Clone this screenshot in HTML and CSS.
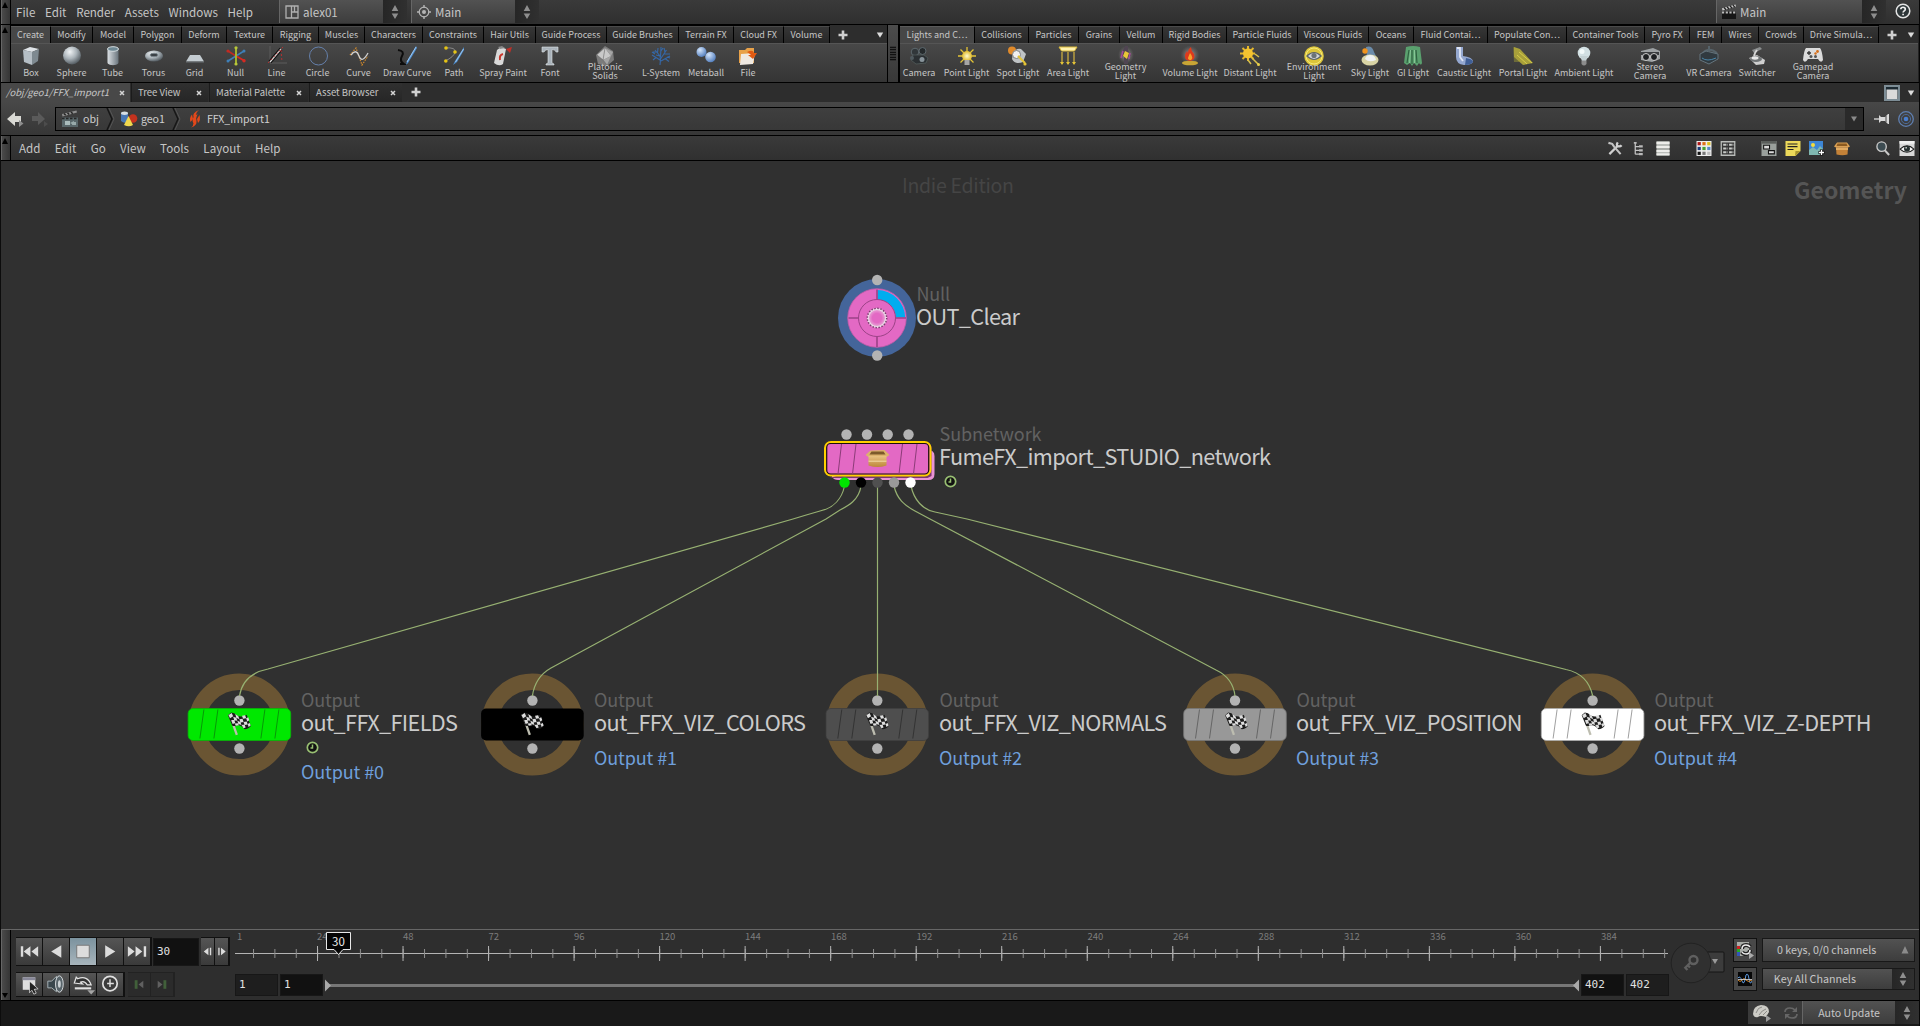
FILE: index.html
```html
<!DOCTYPE html>
<html lang="en">
<head>
<meta charset="utf-8">
<title>Houdini Indie</title>
<link rel="stylesheet" href="styles.css">
</head>
<body>
<svg class="sprite" width="0" height="0">
  <defs>
    <linearGradient id="gSteel" x1="0" x2="1"><stop offset="0" stop-color="#dbe0e4"/><stop offset="1" stop-color="#69747c"/></linearGradient>
    <radialGradient id="gBall" cx=".38" cy=".3" r=".75"><stop offset="0" stop-color="#f0f3f5"/><stop offset=".5" stop-color="#aab3b9"/><stop offset="1" stop-color="#4a5258"/></radialGradient>
    <radialGradient id="gBlue" cx=".35" cy=".3" r=".8"><stop offset="0" stop-color="#d5e6fb"/><stop offset="1" stop-color="#4674b8"/></radialGradient>
    <radialGradient id="gSun"><stop offset="0" stop-color="#fffbd0"/><stop offset="1" stop-color="#e0b92c"/></radialGradient>
    <radialGradient id="gGlow"><stop offset="0" stop-color="#b9a6a6"/><stop offset="1" stop-color="#777" stop-opacity="0"/></radialGradient>
    <linearGradient id="gBox" x1="0" y1="0" x2="0" y2="1"><stop offset="0" stop-color="#e8c382"/><stop offset="1" stop-color="#bd8739"/></linearGradient>
    <radialGradient id="gHub"><stop offset=".5" stop-color="#e369c4"/><stop offset="1" stop-color="#e9b4da"/></radialGradient>
  </defs>
  <symbol id="i-updown" viewBox="0 0 10 16"><path d="M5 1 8.300 7H1.700zM5 15 8.300 9.500H1.700z" fill="#8e8e8e"/></symbol>
  <symbol id="i-plus" viewBox="0 0 10 10"><path d="M3.700.5h2.600v3.200h3.200v2.600H6.300v3.200H3.700V6.300H.5V3.700h3.200z" fill="#d0d0d0"/></symbol>
  <symbol id="i-down" viewBox="0 0 8 6"><path d="M.8.500h6.400L4 5.700z" fill="#dcdcdc"/></symbol>
  <symbol id="i-close" viewBox="0 0 6 6"><path d="m1 1 4 4M5 1 1 5" stroke="#d5d5d5" stroke-width="1.500"/></symbol>
  <symbol id="i-desk" viewBox="0 0 14 14"><path d="M1 1h12v12H1zM6.500 1v12M9.500 1v6M6.500 7H13" fill="none" stroke="#b0b0b0" stroke-width="1.300"/></symbol>
  <symbol id="i-target" viewBox="0 0 14 14"><circle cx="7" cy="7" r="4.800" fill="none" stroke="#b4b4b4" stroke-width="1.200"/><circle cx="7" cy="7" r="2" fill="#b4b4b4"/><path d="M7 0v3M7 11v3M0 7h3M11 7h3" stroke="#b4b4b4" stroke-width="1.400"/></symbol>
  <symbol id="i-clap" viewBox="0 0 16 16"><path d="M1 7.500h14V15H1z" fill="#161616"/><path d="M1 4.200 14.500.5l.5 2L1.500 6.500z" fill="#c9c9c9"/><path d="m3 3.500 2 2.200M6 2.700 8 5M9 2l2 2M12 1.200l1.700 2" stroke="#222" stroke-width="1.300"/><path d="M1 8.500h14" stroke="#bbb" stroke-width="2" stroke-dasharray="2.200 1.500"/></symbol>
  <symbol id="i-clapgrey" viewBox="0 0 18 18"><path d="M1 7.500h16V17H1z" fill="#59676a"/><path d="M1 4 15.500.5l.5 2L1.500 6.500z" fill="#8f8f8f"/><path d="m3 3.500 2 2.200M6.500 2.700l2 2.300M10 2l2 2M1 8.500h16" stroke="#262626" stroke-width="1.500" stroke-dasharray="2.500 1.500"/><rect x="4" y="11" width="5" height="4" fill="#abb"/><path d="m9 13 4-2v4zM11 12h4v3h-4z" fill="#9aa"/></symbol>
  <symbol id="i-help" viewBox="0 0 16 16"><circle cx="8" cy="8" r="6.800" fill="#2e3638" stroke="#e4e4e4" stroke-width="1.500"/><path d="M5.800 6.300C5.800 3.500 10.400 3.600 10.300 6.200 10.200 7.800 8.100 7.900 8.100 9.600M8.100 10.800v1.500" fill="none" stroke="#f0f0f0" stroke-width="1.700"/></symbol>

  <symbol id="t-box" viewBox="0 0 20 20"><path d="m2 4 7-3 9 2-7 3z" fill="#dfe4e8"/><path d="m2 4 9 2v13l-8-3z" fill="#b5bec5"/><path d="m11 6 7-3-1 12-6 4z" fill="#7e8990"/></symbol>
  <symbol id="t-sphere" viewBox="0 0 20 20"><circle cx="10" cy="9.500" r="9" fill="url(#gBall)"/></symbol>
  <symbol id="t-tube" viewBox="0 0 20 20"><path d="M4.500 3v13.500c0 3.500 11 3.500 11 0V3z" fill="url(#gSteel)"/><ellipse cx="10" cy="3" rx="5.500" ry="2.300" fill="#6e8894" stroke="#d6dde0"/></symbol>
  <symbol id="t-torus" viewBox="0 0 20 20"><ellipse cx="10" cy="10" rx="9" ry="5.500" fill="url(#gBall)"/><ellipse cx="10" cy="9" rx="4" ry="1.700" fill="#3b4146" stroke="#7b858c"/></symbol>
  <symbol id="t-grid" viewBox="0 0 20 20"><path d="M5 9h10l4 6.500H1z" fill="#c3cbd0"/><path d="M1 15.500h18v1H1z" fill="#6a7074"/></symbol>
  <symbol id="t-null" viewBox="0 0 20 20"><path d="m2 5 8 5" stroke="#c22a22" stroke-width="1.500"/><path d="m18 5-8 5-8 5" fill="none" stroke="#3f7fb8" stroke-width="1.500"/><path d="m10 10 8 4.500" stroke="#d42a22" stroke-width="2"/><path d="M10 1v18" stroke="#a9b830" stroke-width="1.900"/><circle cx="10" cy="1.800" r="1.600" fill="#b9c83a"/><circle cx="10" cy="18" r="1.600" fill="#b9c83a"/><circle cx="2" cy="5" r="1.600" fill="#c22a22"/><circle cx="18" cy="14.700" r="1.700" fill="#d42a22"/><circle cx="18" cy="5" r="1.500" fill="#3f7fb8"/><circle cx="2" cy="15" r="1.500" fill="#3f7fb8"/></symbol>
  <symbol id="t-line" viewBox="0 0 20 20"><path d="M3 0v17h17" fill="none" stroke="#5c5c5c"/><path d="M3 16 14 3" stroke="#101010" stroke-width="3.500"/><path d="M3 16 14 3" stroke="#ddd" stroke-width="1.200"/><path d="M1 17 16 1M14 4l1 12" stroke="#b83030" stroke-dasharray="2 2" fill="none"/></symbol>
  <symbol id="t-circle" viewBox="0 0 20 20"><circle cx="10.500" cy="10" r="9" fill="none" stroke="#6580ab"/></symbol>
  <symbol id="t-curve" viewBox="0 0 20 20"><path d="m1 9 6-7 6 17 6-9" fill="none" stroke="#d58b2a" stroke-width="1.200" stroke-dasharray="1.500 1.200"/><path d="M2 9q5-7 8 1t9-3" fill="none" stroke="#cfcfcf" stroke-width="1.300"/></symbol>
  <symbol id="t-draw" viewBox="0 0 20 20"><path d="M1 4q7 1 4 6t2 8H3" fill="none" stroke="#0c0c0c" stroke-width="2"/><path d="m19 0 1 2-9 15-2 2 1-4z" fill="#4f8fd0"/><path d="m19 1-9 15" stroke="#b0d0f0" stroke-width=".8"/></symbol>
  <symbol id="t-path" viewBox="0 0 20 20"><path d="M1 2q11-1 10 4T1 15" fill="none" stroke="#888"/><circle cx="2" cy="2" r="1.800" fill="#e6c414"/><circle cx="11" cy="6" r="1.800" fill="#e6c414"/><circle cx="1.800" cy="15" r="1.800" fill="#e6c414"/><path d="m20 1-9 14-2 4 4-3 7-12z" fill="#4f8fd0"/><path d="m19.500 3-8 13" stroke="#b0d0f0" stroke-width=".8"/></symbol>
  <symbol id="t-spray" viewBox="0 0 20 20"><path d="m4 4 4-3 5 2-3 15q-4 3-9-1z" fill="#d9d9d9"/><path d="m5 1 4-1 3 2-5 1z" fill="#8a8a8a"/><path d="m13 3 6-2-2 6z" fill="#c03028"/><path d="M10 8q-4 1-3 6" stroke="#c8352a" stroke-width="2" fill="none"/></symbol>
  <symbol id="t-font" viewBox="0 0 20 20"><path d="M2 1h16v5h-2q-.500-2.500-4-2.500V17l2 1v1H6v-1l2-1V3.500Q5 3.500 4 6H2z" fill="#a9b2ba" stroke="#dfe4e7" stroke-width=".6"/></symbol>
  <symbol id="t-platonic" viewBox="0 0 20 20"><path d="m10 0 8 5 1 9-7 6-9-2-2-9z" fill="#7c7c7c"/><path d="m10 2 6 8-8 4-6-5z" fill="#c9c9c9"/><path d="m10 2 6 8 2-4zM8 14l8-4-4 9z" fill="#a5a5a5"/><path d="m10 2-2 12M2 9l6 5 4 5" stroke="#666" stroke-width=".6" fill="none"/></symbol>
  <symbol id="t-lsys" viewBox="0 0 20 20"><path d="M9 19q1-5 0-9L4 4M9.500 11 10 1M9.500 13l6-9M9 14 1 9M10 15l9-5M6 6H2M6.500 7 7 2M13 8h6M14 6 13 2M5 11.500 2 14M14 12.500l4 3M10 5l2-3M4 8 1 6M16 11l3 1M9 10 5 9" fill="none" stroke="#3568a8" stroke-width="1.100"/></symbol>
  <symbol id="t-meta" viewBox="0 0 20 20"><circle cx="5.500" cy="6" r="5" fill="url(#gBlue)"/><circle cx="14.500" cy="11" r="5.300" fill="url(#gBlue)"/></symbol>
  <symbol id="t-file" viewBox="0 0 20 20"><path d="M1 4h6l2-2h7v15H1z" fill="#e8a24a"/><path d="m3 8 14-1-2 11-13 1z" fill="#efe9e2"/><path d="M9 6q6-3 7 1l3 0-4 6-5-4h3q-2-2-4-3z" fill="#e25a12"/></symbol>
  <symbol id="t-cam" viewBox="0 0 20 20"><circle cx="6" cy="6" r="3.800" fill="#31373a" stroke="#5d686d"/><circle cx="13.500" cy="5" r="3.500" fill="#252a2c" stroke="#5d686d"/><path d="M4 9h11l4 3-2 5-10 1-5-4z" fill="#2b3033" stroke="#55605f" stroke-width=".7"/><circle cx="13" cy="13.500" r="2.500" fill="#88939a"/><circle cx="3" cy="12" r="2" fill="#505a5f"/></symbol>
  <symbol id="t-point" viewBox="0 0 20 20"><path d="M10 1v18M1 10h18M3.500 3.500l13 13M16.500 3.500l-13 13" stroke="#e3c336" stroke-width="1.300"/><circle cx="10" cy="10" r="5" fill="url(#gSun)"/><path d="M7.500 14h5v5h-5z" fill="#a5a5a5"/></symbol>
  <symbol id="t-spot" viewBox="0 0 20 20"><circle cx="4" cy="4.500" r="4" fill="#e08a2a"/><path d="M5 7q2-5 8-4l5 5-3 8q-8 3-11-3z" fill="#bfc3c5"/><circle cx="8.500" cy="8.500" r="4" fill="#f1f1f1" stroke="#818181"/><path d="m10 10 7 7" stroke="#e3c336" stroke-width="2"/><circle cx="17" cy="18" r="1.600" fill="#e3c336"/></symbol>
  <symbol id="t-area" viewBox="0 0 20 20"><path d="M1 1h18l-2.500 4h-13z" fill="#fff2b0" stroke="#d9b93a"/><path d="M4 6v12M10 6v12M16 6v12" stroke="#d5b540" stroke-width="1.200"/><path d="M2 16h4l-2 3zM8 16h4l-2 3zM14 16h4l-2 3z" fill="#e3c336"/></symbol>
  <symbol id="t-geo" viewBox="0 0 20 20"><ellipse cx="10" cy="9" rx="8" ry="9" fill="url(#gGlow)"/><path d="M9 0h3v4l3 6-3 1v7H8v-7l-3-2z" fill="#504552"/><path d="m9 5 4 2-2 6-4-3z" fill="#e7c738"/><path d="M7 5 5 12M13 13l1-6" stroke="#a44a9a" stroke-width="1.500"/></symbol>
  <symbol id="t-vol" viewBox="0 0 20 20"><ellipse cx="10" cy="9" rx="9.500" ry="9.500" fill="url(#gGlow)"/><ellipse cx="10" cy="17" rx="8" ry="2.300" fill="#c8a535"/><path d="M5 11q0-4 2-6l1 2q0-4 3-6 0 4 3 7 2 6-4 7-5-.5-5-4z" fill="#dd3a1c"/><path d="M8 12q1-3 2-5 4 5 1 7-3 0-3-2z" fill="#f7a02c"/></symbol>
  <symbol id="t-dist" viewBox="0 0 20 20"><path d="M8 0v15M0 7.500h15M2.500 2l11 11M13.500 2l-11 11" stroke="#e5b82c" stroke-width="2"/><circle cx="8" cy="7.500" r="5" fill="#f4c330"/><path d="m15 8 4 3M12 12l6 6M8 14l3 4" stroke="#d9c04a" stroke-width="1.500"/><circle cx="18.500" cy="18.500" r="1.500" fill="#e9d04a"/></symbol>
  <symbol id="t-env" viewBox="0 0 20 20"><circle cx="10" cy="10" r="9.800" fill="#dcc53a"/><circle cx="10" cy="10" r="8" fill="none" stroke="#f5e97a"/><path d="M2 10q8-8 16 0-8 8-16 0z" fill="#5d6468"/><path d="M4 10q6-6 12 0-6 6-12 0z" fill="#d0d3d5"/><circle cx="10" cy="9.500" r="2.600" fill="#6a7277"/></symbol>
  <symbol id="t-sky" viewBox="0 0 20 20"><path d="M6 1q6-2 8 5l3 6H7z" fill="#6c8caa"/><circle cx="5" cy="5" r="2.700" fill="#f0941f"/><ellipse cx="10" cy="14" rx="8.500" ry="5.500" fill="#d9d4a5"/><path d="M5 13q1-4 5-4 5 0 6 5-7 3-11-1z" fill="#eef1f3"/></symbol>
  <symbol id="t-gi" viewBox="0 0 20 20"><path d="M3 1q7-2 14 0l2 16q-1 3-3 0l-2 3-3-3-2 3-2-3-3 2-3-2z" fill="#5aa06e"/><path d="m6 4-2 13M9 4v14M13 4l1 13" stroke="#2f6140" stroke-width="1.200"/><path d="m7.500 4-1 13M11.500 4v13" stroke="#93cfa1" stroke-width=".8"/></symbol>
  <symbol id="t-caustic" viewBox="0 0 20 20"><path d="M2 1h7v9q9 1 10 5 0 4-9 4Q2 18 2 11z" fill="#95a8d0"/><path d="M3 2h3v9l3 4" stroke="#dfe6f5" stroke-width="1.800" fill="none"/><path d="M12 12q7 1 7 4-2 3-8 3z" fill="#405f96"/></symbol>
  <symbol id="t-portal" viewBox="0 0 20 20"><path d="m0 1 6 2v13H1z" fill="#6c6a3a"/><path d="m1 1 6 2 13 14-10 2-9-8z" fill="#a8a03a"/><path d="m6 6 13 11M4 9l10 9" stroke="#d6cc4a"/></symbol>
  <symbol id="t-amb" viewBox="0 0 20 20"><circle cx="10" cy="7" r="6.300" fill="#d2e0e3"/><path d="M6 10h8l-2 5H8z" fill="#c4d1d4"/><path d="M7.500 14.500h5V18q-2.500 3-5 0z" fill="#8c8c8c"/><circle cx="8" cy="5.500" r="2.500" fill="#f3fafa"/></symbol>
  <symbol id="t-stereo" viewBox="0 0 20 20"><path d="m1 5 12-3 7 3v8l-8 3-11-2z" fill="#9da1a3"/><path d="M1 6h18v3H1z" fill="#3a3d3f"/><circle cx="6" cy="11" r="3.500" fill="#1d2022" stroke="#ccc"/><circle cx="14" cy="11" r="3.500" fill="#1d2022" stroke="#ccc"/></symbol>
  <symbol id="t-vr" viewBox="0 0 20 20"><path d="M3 8q6-8 15-1" fill="none" stroke="#56636a" stroke-width="2"/><path d="m1 8 6-3 12 3v5l-9 5-9-4z" fill="#303a40" stroke="#65757e"/><path d="M3 12q5 4 14 0" stroke="#4a86aa" fill="none"/><path d="M10 0v6" stroke="#56636a" stroke-width="2"/></symbol>
  <symbol id="t-switch" viewBox="0 0 20 20"><path d="m5 4 8-3 2 2-8 4z" fill="#8a8d8e"/><path d="M10 4q-4 5-2 8" stroke="#d6d6d6" stroke-width="2" fill="none"/><path d="m2 12 8-3 8 5-1 4-8 1z" fill="#cfcfcf"/><ellipse cx="9" cy="13" rx="6" ry="3" fill="#6f7375"/><ellipse cx="8" cy="12" rx="3.500" ry="1.700" fill="#e9e9e9"/></symbol>
  <symbol id="t-pad" viewBox="0 0 20 20"><path d="M3 2h14q2 2 3 12-2 4-5-1H5q-3 5-5 1Q1 4 3 2z" fill="#dcdcdc"/><path d="M6 5v4M4 7h4" stroke="#333" stroke-width="1.300"/><circle cx="14.500" cy="5.500" r="1.400" fill="#d7701c"/><circle cx="12.500" cy="7.500" r="1.200" fill="#d7701c"/><circle cx="8" cy="10.500" r="1.500" fill="#555"/><circle cx="12.500" cy="10.500" r="1.500" fill="#555"/></symbol>

  <symbol id="i-back" viewBox="0 0 18 16"><path d="M0 8 8 1v4h6v6H8v4z" fill="#d9d9d4"/><path d="m12 9 4.500 3.500-4.500 3.500z" fill="#8d8d8d"/></symbol>
  <symbol id="i-fwd" viewBox="0 0 18 16"><path d="M13 8 6 1v4H0v5h6v4z" fill="#5a5a5a"/><path d="m12 10 4 3-4 3z" fill="#4c4c4c"/></symbol>
  <symbol id="i-geo" viewBox="0 0 18 16"><path d="M1 2v8q3 3 7 1V2z" fill="#4776b4"/><ellipse cx="4.500" cy="2.200" rx="3.500" ry="1.700" fill="#d6dde2"/><circle cx="13" cy="7.500" r="4.300" fill="#c3321e"/><path d="M8.500 5 13 14q-4 2.500-9 0z" fill="#f0d84e"/></symbol>
  <symbol id="i-ffx" viewBox="0 0 12 18"><path d="M10 0Q3 3 4.500 7q1.500 3-.5 6Q6 12 7 9.500 8 6 6.800 5 7 2 10 0zM2 17.500q6-2 5.500-6Q6.500 8 8.500 4 6 5 4.300 7.500 2.800 11 4.500 13 4.500 16 2 17.500z" fill="#e4481a"/><path d="M3 4.500Q0 8 1.500 12L4 9zM9 13q3-3 1.500-8L8 9z" fill="#e4481a"/></symbol>
  <symbol id="i-pane" viewBox="0 0 16 16"><rect width="16" height="16" fill="#7d8d96"/><rect x="2" y="2" width="12" height="12" fill="#1c2a32"/><path d="M2.500 4.500h11V14h-11z" fill="#dadada"/></symbol>
  <symbol id="i-pin" viewBox="0 0 16 14"><path d="M0 7h6" stroke="#ddd" stroke-width="1.300"/><path d="m5 3 2 2h4l3-3h1v10h-1l-3-3H7l-2 2z" fill="#d9d9d9"/><path d="M12 4v6" stroke="#444"/></symbol>
  <symbol id="i-radar" viewBox="0 0 16 16"><g fill="none" stroke="#5f7fb0"><circle cx="8" cy="8" r="7.300" stroke-width="1.300"/><circle cx="8" cy="8" r="4.600" stroke="#4d6a98"/></g><circle cx="8" cy="8" r="2.300" fill="#4a7fd0"/></symbol>
  <symbol id="i-tools" viewBox="0 0 16 16"><path d="m2 14 9-9M11 1.500q-2 3 0 4 2.500 1 4-1" fill="none" stroke="#d0d0d0" stroke-width="2.400"/><path d="m1 2 4 1 2 3 7 8" fill="none" stroke="#c4c4c4" stroke-width="2.200"/></symbol>
  <symbol id="i-tree" viewBox="0 0 14 16"><path d="M3 2v12M3 6h4M3 10h4M3 14h4" fill="none" stroke="#c4c4c4" stroke-width="1.300"/><path d="M1.500 1h3v2h-3zM7 4.500h4v2.500H7zM7 8.700h4v2.500H7zM7 12.800h4v2.500H7z" fill="#b9b9b9"/></symbol>
  <symbol id="i-list" viewBox="0 0 14 16"><path d="M0 0h14v16H0z" fill="#a9aca8"/><path d="M0 1h14v2.500H0zM0 5h14v2.500H0zM0 9.500h14V12H0zM0 13h14v2H0z" fill="#ededea"/></symbol>
  <symbol id="i-palette" viewBox="0 0 14 14"><path d="M0 0h14v14H0z" fill="#eee"/><path d="M1 1h3v3H1z" fill="#b01818"/><path d="M5.500 1h3v3h-3z" fill="#e07018"/><path d="M10 1h3v3h-3z" fill="#e0c018"/><path d="M1 5.500h3v3H1z" fill="#1c3c78"/><path d="M5.500 5.500h3v3h-3z" fill="#4aa030"/><path d="M10 5.500h3v3h-3z" fill="#5a88c8"/><path d="M1 10h3v3H1z" fill="#111"/><path d="M5.500 10h3v3h-3z" fill="#777"/><path d="M10 10h3v3h-3z" fill="#bbb"/></symbol>
  <symbol id="i-grid" viewBox="0 0 14 14"><path d="M.7.700h12.600v12.600H.7z" fill="none" stroke="#b9bcb9" stroke-width="1.200"/><path d="M2.500 3.500h4M8 3.500h4M2.500 7h4M8 7h4M2.500 10.500h4M8 10.500h4" stroke="#c9ccc9" stroke-width="1.800" stroke-dasharray="2.600 .6"/></symbol>
  <symbol id="i-netbox" viewBox="0 0 14 14"><path d="M0 0h14v14H0z" fill="#9aa09c"/><path d="M0 0h14v2.500H0z" fill="#5a5e5b"/><path d="M2 4h5.500v3.500H2zM6.500 9h5.500v3H6.500z" fill="#ddd" stroke="#111"/></symbol>
  <symbol id="i-note" viewBox="0 0 15 15"><path d="M0 0h15v10l-5 5H0z" fill="#ecd95a"/><path d="M2 3h10M2 5.700h10M2 8.500h6" stroke="#222" stroke-width="1.200"/><path d="m9.500 15 .5-5h5z" fill="#a8962e"/></symbol>
  <symbol id="i-image" viewBox="0 0 16 15"><path d="M0 0h14v14H0z" fill="#3d86d6"/><path d="M0 14V9l4-3 4 3 3-4 3 3v6z" fill="#7fb7b0"/><circle cx="4" cy="4" r="2" fill="#f4dc3c"/><path d="M12.500 8.500v6M9.500 11.500h6" stroke="#111" stroke-width="3.200"/><path d="M12.500 9v5M10 11.500h5" stroke="#fff" stroke-width="1.300"/></symbol>
  <symbol id="i-box" viewBox="0 0 16 14"><path d="m3 1 10 0 3 4-2 1H2L0 5z" fill="#dba155"/><path d="M2 6h12l-.5 7q-5 1.500-11 0z" fill="#c48238"/><path d="M3.500 2h9l1 2.500h-11z" fill="#8c5a20"/><path d="M2 6h12v2.500H2z" fill="#e2ab62"/></symbol>
  <symbol id="i-search" viewBox="0 0 16 16"><path d="m10 10 4.500 5" stroke="#c9c9c9" stroke-width="2.200"/><circle cx="6.500" cy="6" r="5" fill="#3d4c52" stroke="#cdcdcd" stroke-width="1.400"/></symbol>
  <symbol id="i-eye" viewBox="0 0 14 14"><path d="M0 0h14v14H0z" fill="#d8d8d8"/><path d="M0 0h14v2.500H0z" fill="#efefef"/><path d="M.5 7.500q6.500-6 13 0-6.500 6-13 0z" fill="#f8f8f8" stroke="#222"/><circle cx="7" cy="7.300" r="2.800" fill="#26302f"/><circle cx="6.200" cy="6.300" r=".8" fill="#ddd"/></symbol>

  <symbol id="i-flag" viewBox="0 0 26 26"><path d="m4 3 7 20" stroke="#bdbdb0" stroke-width="2.200"/><path d="m2.500 4 3-2.500q3 0 6 3 5 2 9-1l4 11q-2 3-6 3-4-5-8-3.500-3 1-4 0z" fill="#1c1c1c"/><g fill="#dedede"><path d="m3 4 3-2 1.500 3-3 2zM9.500 3l3 2 1 3-3-1.500zM16 4.500l3-.5 1 3-3 .5zM7.500 5.500l3 1 1 3-3-.5zM13.500 8l3-.5 1 3-3 .5zM20 7l2-1 1 3-2 1zM5.500 9l3-.5 1 3-2.500 1zM11.500 9.500l3 1 1 3-3-1zM17.500 10.500l3-.5 1 3-3 .5zM9 12l3-.2 1 2-3 .5zM15.500 13.500l3-.5 1 3-2 .5zM21.500 12.500l2-1 .8 2.500-2 1.500z"/></g></symbol>
  <symbol id="i-clock" viewBox="0 0 13 13"><circle cx="6.500" cy="6.500" r="5.200" fill="#111" stroke="#98bf72" stroke-width="1.700"/><path d="M6.500 3.500v3.500H4.500" fill="none" stroke="#98bf72" stroke-width="1.500"/></symbol>
  <symbol id="i-parcel" viewBox="0 0 24 18"><path d="m5 1 14-.5 5 5-3 2H3L0 5.500z" fill="#dcb26c"/><path d="M6 2h12l2 3H4z" fill="#7c5a2a"/><path d="M3 6.500h18V16q-9 3-18 0z" fill="url(#gBox)"/><path d="M3 11h18v1.500H3z" fill="#e9ca90"/></symbol>
</svg>

<div class="app">
  <header class="menubar">
    <div class="grip"></div>
    <nav class="menu menu-main"><span>File</span><span>Edit</span><span>Render</span><span>Assets</span><span>Windows</span><span>Help</span></nav>
    <div class="combo desk"><svg width="14" height="14"><use href="#i-desk"/></svg><span>alex01</span></div>
    <div class="step"><svg width="10" height="16"><use href="#i-updown"/></svg></div>
    <div class="combo radial"><svg width="14" height="14"><use href="#i-target"/></svg><span>Main</span></div>
    <div class="step"><svg width="10" height="16"><use href="#i-updown"/></svg></div>
    <div class="combo take"><svg width="16" height="16"><use href="#i-clap"/></svg><span>Main</span></div>
    <div class="step"><svg width="10" height="16"><use href="#i-updown"/></svg></div>
    <svg class="help" width="16" height="16"><use href="#i-help"/></svg>
  </header>

  <section class="shelves">
    <div class="grip"></div>
    <div class="shelf shelf-a">
      <div class="tabs">
        <span class="on">Create</span><span>Modify</span><span>Model</span><span>Polygon</span><span>Deform</span><span>Texture</span><span>Rigging</span><span>Muscles</span><span>Characters</span><span>Constraints</span><span>Hair Utils</span><span>Guide Process</span><span>Guide Brushes</span><span>Terrain FX</span><span>Cloud FX</span><span>Volume</span>
        <div class="tab-end"><svg width="10" height="10"><use href="#i-plus"/></svg><svg width="8" height="6"><use href="#i-down"/></svg></div>
      </div>
      <div class="tools">
        <div><svg><use href="#t-box"/></svg><b>Box</b></div>
        <div><svg><use href="#t-sphere"/></svg><b>Sphere</b></div>
        <div><svg><use href="#t-tube"/></svg><b>Tube</b></div>
        <div><svg><use href="#t-torus"/></svg><b>Torus</b></div>
        <div><svg><use href="#t-grid"/></svg><b>Grid</b></div>
        <div><svg><use href="#t-null"/></svg><b>Null</b></div>
        <div><svg><use href="#t-line"/></svg><b>Line</b></div>
        <div><svg><use href="#t-circle"/></svg><b>Circle</b></div>
        <div><svg><use href="#t-curve"/></svg><b>Curve</b></div>
        <div><svg><use href="#t-draw"/></svg><b>Draw Curve</b></div>
        <div><svg><use href="#t-path"/></svg><b>Path</b></div>
        <div><svg><use href="#t-spray"/></svg><b>Spray Paint</b></div>
        <div><svg><use href="#t-font"/></svg><b>Font</b></div>
        <div class="two"><svg><use href="#t-platonic"/></svg><b>Platonic<br>Solids</b></div>
        <div><svg><use href="#t-lsys"/></svg><b>L-System</b></div>
        <div><svg><use href="#t-meta"/></svg><b>Metaball</b></div>
        <div><svg><use href="#t-file"/></svg><b>File</b></div>
      </div>
    </div>
    <div class="splitter"><i></i></div>
    <div class="shelf shelf-b">
      <div class="tabs">
        <span class="on">Lights and C…</span><span>Collisions</span><span>Particles</span><span>Grains</span><span>Vellum</span><span>Rigid Bodies</span><span>Particle Fluids</span><span>Viscous Fluids</span><span>Oceans</span><span>Fluid Contai…</span><span>Populate Con…</span><span>Container Tools</span><span>Pyro FX</span><span>FEM</span><span>Wires</span><span>Crowds</span><span>Drive Simula…</span>
        <div class="tab-end"><svg width="10" height="10"><use href="#i-plus"/></svg><svg width="8" height="6"><use href="#i-down"/></svg></div>
      </div>
      <div class="tools">
        <div><svg><use href="#t-cam"/></svg><b>Camera</b></div>
        <div><svg><use href="#t-point"/></svg><b>Point Light</b></div>
        <div><svg><use href="#t-spot"/></svg><b>Spot Light</b></div>
        <div><svg><use href="#t-area"/></svg><b>Area Light</b></div>
        <div class="two"><svg><use href="#t-geo"/></svg><b>Geometry<br>Light</b></div>
        <div><svg><use href="#t-vol"/></svg><b>Volume Light</b></div>
        <div><svg><use href="#t-dist"/></svg><b>Distant Light</b></div>
        <div class="two"><svg><use href="#t-env"/></svg><b>Environment<br>Light</b></div>
        <div><svg><use href="#t-sky"/></svg><b>Sky Light</b></div>
        <div><svg><use href="#t-gi"/></svg><b>GI Light</b></div>
        <div><svg><use href="#t-caustic"/></svg><b>Caustic Light</b></div>
        <div><svg><use href="#t-portal"/></svg><b>Portal Light</b></div>
        <div><svg><use href="#t-amb"/></svg><b>Ambient Light</b></div>
        <div class="two"><svg><use href="#t-stereo"/></svg><b>Stereo<br>Camera</b></div>
        <div><svg><use href="#t-vr"/></svg><b>VR Camera</b></div>
        <div><svg><use href="#t-switch"/></svg><b>Switcher</b></div>
        <div class="two"><svg><use href="#t-pad"/></svg><b>Gamepad<br>Camera</b></div>
      </div>
    </div>
  </section>

  <div class="pane-tabs">
    <div class="ptab on"><span>/obj/geo1/FFX_import1</span><svg width="6" height="6"><use href="#i-close"/></svg></div>
    <div class="ptab"><span>Tree View</span><svg width="6" height="6"><use href="#i-close"/></svg></div>
    <div class="ptab"><span>Material Palette</span><svg width="6" height="6"><use href="#i-close"/></svg></div>
    <div class="ptab"><span>Asset Browser</span><svg width="6" height="6"><use href="#i-close"/></svg></div>
    <svg class="ptab-add" width="10" height="10"><use href="#i-plus"/></svg>
    <div class="pane-ctl"><svg width="16" height="16"><use href="#i-pane"/></svg><svg width="8" height="6"><use href="#i-down"/></svg></div>
  </div>

  <div class="pathbar">
    <svg class="nav-back" width="18" height="16"><use href="#i-back"/></svg>
    <svg class="nav-fwd" width="18" height="16"><use href="#i-fwd"/></svg>
    <div class="path">
      <svg class="c-obj" width="18" height="18"><use href="#i-clapgrey"/></svg><span>obj</span>
      <svg class="chev" width="9" height="22" viewBox="0 0 9 22"><path d="m1 0 5 11-5 11" fill="none" stroke="#161616" stroke-width="1.500"/><path d="m3 0 5 11-5 11" fill="none" stroke="#5a5a5a" stroke-width=".8"/></svg>
      <svg class="c-geo" width="18" height="16"><use href="#i-geo"/></svg><span>geo1</span>
      <svg class="chev" width="9" height="22" viewBox="0 0 9 22"><path d="m1 0 5 11-5 11" fill="none" stroke="#161616" stroke-width="1.500"/><path d="m3 0 5 11-5 11" fill="none" stroke="#5a5a5a" stroke-width=".8"/></svg>
      <svg class="c-ffx" width="12" height="18"><use href="#i-ffx"/></svg><span>FFX_import1</span>
      <div class="path-drop"><svg width="8" height="6" viewBox="0 0 8 6"><path d="M1 .500h6L4 5.500z" fill="#8a8a8a"/></svg></div>
    </div>
    <svg class="pin" width="16" height="14"><use href="#i-pin"/></svg>
    <svg width="16" height="16"><use href="#i-radar"/></svg>
  </div>

  <div class="netbar">
    <div class="grip"></div>
    <nav class="menu menu-net"><span>Add</span><span>Edit</span><span>Go</span><span>View</span><span>Tools</span><span>Layout</span><span>Help</span></nav>
    <div class="net-icons">
      <svg><use href="#i-tools"/></svg><svg><use href="#i-tree"/></svg><svg><use href="#i-list"/></svg><svg><use href="#i-palette"/></svg><svg><use href="#i-grid"/></svg><svg><use href="#i-netbox"/></svg><svg><use href="#i-note"/></svg><svg><use href="#i-image"/></svg><svg><use href="#i-box"/></svg><svg><use href="#i-search"/></svg><svg><use href="#i-eye"/></svg>
    </div>
  </div>

  <main class="network">
    <svg width="1918" height="768" viewBox="1 161 1918 768">
      <defs>
        <g id="node">
          <circle r="42.800" fill="none" stroke="#6a5533" stroke-width="16.500"/>
          <circle cy="-24" r="5.200" fill="#b3b3b3"/><circle cy="24" r="5.200" fill="#b3b3b3"/>
        </g>
        <path id="bars" d="M-35.500-15-39.500 14M-21.500-15-25.500 14M25.500-15 21.500 14M39.500-15 35.500 14"/>
      </defs>
      <text class="watermark" x="902" y="193" textLength="112">Indie Edition</text>
      <text class="context" x="1794" y="198.500" textLength="113">Geometry</text>

      <circle cx="877" cy="318" r="39" fill="#44659a"/>
      <circle cx="877" cy="318" r="29.300" fill="#e369c4" stroke="#c05aa6" stroke-width=".8"/>
      <path d="M877.500 290a28 28 0 0 1 27.700 27.500h-9.500A18.500 18.500 0 0 0 877.500 299.500z" fill="#00adef"/>
      <circle cx="877" cy="318" r="18.500" fill="none" stroke="#9c4387"/>
      <path d="M877 289.500v10M877 337v10M848.500 318h10M896 318h10" stroke="#9c4387" stroke-width="1.600"/>
      <circle cx="877" cy="318" r="9.300" fill="url(#gHub)"/>
      <circle cx="877" cy="318" r="9" fill="none" stroke="#ecdbe8" stroke-width="2"/>
      <circle cx="877" cy="318" r="9.700" fill="none" stroke="#7c3c6e" stroke-width="1.500" stroke-dasharray="1.500 1.547"/>
      <circle cx="877.200" cy="280" r="5.200" fill="#b3b3b3"/><circle cx="877.200" cy="355.500" r="5.200" fill="#b3b3b3"/>
      <text class="type" x="916.500" y="301" textLength="33.500">Null</text>
      <text class="name" x="916" y="325" textLength="104">OUT_Clear</text>

      <path d="M832 450h96q6.500 0 6.500 6v18q0 6-6 6H838q-4 0-6-3z" fill="#ea93d4"/>
      <path d="M926 446h5.500v30l-4 2H830z" fill="#7a3b6b"/>
      <rect x="825" y="442" width="105.500" height="33.500" rx="6" fill="#e369c4" stroke="#ffd000" stroke-width="2"/>
      <rect x="826.700" y="443.500" width="102" height="30.500" rx="4" fill="none" stroke="#1c1008" stroke-width="1.200"/>
      <path d="m841.500 444-3.500 30M856 444l-3.500 30M902.500 444l-3.500 30M917 444l-3.500 30" stroke="#8c3c78"/>
      <svg x="865.500" y="449.500" width="24" height="18"><use href="#i-parcel"/></svg>
      <g fill="#b3b3b3"><circle cx="846.500" cy="434.500" r="5.200"/><circle cx="867" cy="434.500" r="5.200"/><circle cx="887.700" cy="434.500" r="5.200"/><circle cx="908.500" cy="434.500" r="5.200"/></g>
      <text class="type" x="939.500" y="441" textLength="102">Subnetwork</text>
      <text class="name" x="939" y="465" textLength="332">FumeFX_import_STUDIO_network</text>
      <svg x="944" y="475" width="13" height="13"><use href="#i-clock"/></svg>

      <g transform="translate(239.400 724.500)"><use href="#node"/><rect x="-51.300" y="-16" width="102.600" height="32" rx="5" fill="#00e800" stroke="#08b508" stroke-width=".8"/><use href="#bars" stroke="#089808"/><svg x="-14" y="-13.500" width="27" height="27"><use href="#i-flag"/></svg></g>
      <g transform="translate(532.400 724.500)"><use href="#node"/><rect x="-51.300" y="-16" width="102.600" height="32" rx="5"/><svg x="-14" y="-13.500" width="27" height="27"><use href="#i-flag"/></svg></g>
      <g transform="translate(877.300 724.500)"><use href="#node"/><rect x="-51.300" y="-16" width="102.600" height="32" rx="5" fill="#4e4e4e" stroke="#3f3f3f" stroke-width=".8"/><use href="#bars" stroke="#333"/><svg x="-14" y="-13.500" width="27" height="27"><use href="#i-flag"/></svg></g>
      <g transform="translate(1235 724.500)"><use href="#node"/><rect x="-51.300" y="-16" width="102.600" height="32" rx="5" fill="#989898" stroke="#777" stroke-width=".8"/><use href="#bars" stroke="#666"/><svg x="-12.500" y="-13.500" width="27" height="27"><use href="#i-flag"/></svg></g>
      <g transform="translate(1592.600 724.500)"><use href="#node"/><rect x="-51.300" y="-16" width="102.600" height="32" rx="5" fill="#fff" stroke="#aaa" stroke-width=".8"/><use href="#bars" stroke="#a0a0a0"/><svg x="-13.500" y="-13.500" width="27" height="27"><use href="#i-flag"/></svg></g>

      <g fill="none" stroke="#97b172" stroke-width="1.200">
        <path d="M844.500 486C842 498 834 508 820 511Q806 515 793 519L268 669Q243 674 239.500 696"/>
        <path d="M861 486C859 500 848 506 840 510L826 519 551 668Q535 677 532.400 696"/>
        <path d="M877.500 486V696"/>
        <path d="M894 486C897 499 904 505 915 511L930 519 1216 670Q1233 678 1235 696"/>
        <path d="M911 486C914 500 923 510 935 512L967 519 1566 669.500Q1588 674 1592.700 696"/>
      </g>
      <circle cx="844.500" cy="482.500" r="5.200" fill="#00e400"/><circle cx="861" cy="482.500" r="5.200"/><circle cx="877.500" cy="482.500" r="5.200" fill="#505050"/><circle cx="894" cy="482.500" r="5.200" fill="#999"/><circle cx="910.500" cy="482.500" r="5.200" fill="#fff"/>

      <text class="type" x="301" y="707" textLength="59">Output</text>
      <text class="name" x="301" y="731" textLength="157">out_FFX_FIELDS</text>
      <svg x="306" y="741" width="13" height="13"><use href="#i-clock"/></svg>
      <text class="out" x="301" y="779" textLength="83">Output #0</text>
      <text class="type" x="594" y="707" textLength="59">Output</text>
      <text class="name" x="594" y="731" textLength="212">out_FFX_VIZ_COLORS</text>
      <text class="out" x="594" y="765" textLength="83">Output #1</text>
      <text class="type" x="939.500" y="707" textLength="59">Output</text>
      <text class="name" x="939" y="731" textLength="228">out_FFX_VIZ_NORMALS</text>
      <text class="out" x="939" y="765" textLength="83">Output #2</text>
      <text class="type" x="1296.500" y="707" textLength="59">Output</text>
      <text class="name" x="1296" y="731" textLength="226.500">out_FFX_VIZ_POSITION</text>
      <text class="out" x="1296" y="765" textLength="83">Output #3</text>
      <text class="type" x="1654.500" y="707" textLength="59">Output</text>
      <text class="name" x="1654" y="731" textLength="217.500">out_FFX_VIZ_Z-DEPTH</text>
      <text class="out" x="1654" y="765" textLength="83">Output #4</text>
    </svg>
  </main>

  <footer class="playbar">
    <div class="grip grip-down"></div>
    <div class="transport">
      <div class="row">
        <div class="btns">
          <svg viewBox="0 0 27 27"><path d="M5 8h2.500v11H5zM15 8v11l-7-5.500zM23 8v11l-7-5.500z"/></svg>
          <svg viewBox="0 0 27 27"><path d="M19 7v13L8.500 13.500z"/></svg>
          <svg class="stop" viewBox="0 0 27 27"><path d="M7 7h13v13H7z" stroke="#777"/></svg>
          <svg viewBox="0 0 27 27"><path d="M8.500 7v13L19 13.500z"/></svg>
          <svg viewBox="0 0 27 27"><path d="M4 8v11l7-5.500zM12 8v11l7-5.500zM20.500 8H23v11h-2.500z"/></svg>
        </div>
        <div class="field frame">30</div>
        <div class="btns nudge">
          <svg viewBox="0 0 14 27"><path d="M8 9.500v8l-5-4zM9.500 9.500H11v8H9.500z"/></svg>
          <svg viewBox="0 0 14 27"><path d="M6.500 9.500v8l5-4zM3.500 9.500H5v8H3.500z"/></svg>
        </div>
      </div>
      <div class="row low">
        <div class="btns">
          <svg viewBox="0 0 27 23"><path d="M7 4h13v13H7z" fill="#dedede"/><path d="M7 4h13v3H7z" fill="#889"/><path d="m14 8 9 8-4 .500 2 4-2.500 1-2-4L14 20z" fill="#222" stroke="#eee" stroke-width=".7"/></svg>
          <svg viewBox="0 0 27 23"><path d="M5 8h4l5-5v16l-5-4H5z" fill="#39464c" stroke="#a9b4b8"/><ellipse cx="17" cy="11" rx="4" ry="8.500" fill="#58646a" stroke="#d7dcdf"/><ellipse cx="17" cy="11" rx="1.500" ry="4" fill="#c9d0d3"/></svg>
          <svg viewBox="0 0 27 23"><path d="m4.500 10 2-6 1.500 1.500q10-4 14 6.500h-4q-3-5-7-3l2 2z" fill="#333" stroke="#e2e2e2" stroke-width="1.300"/><path d="M5 15.500h17" stroke="#e2e2e2" stroke-width="2.200"/><path d="M18 17.500h8l-4 4.500z" fill="#a5a5a5"/></svg>
          <svg viewBox="0 0 27 23"><circle cx="13.500" cy="10.500" r="7.500" fill="#3c3c3c" stroke="#e0e0e0" stroke-width="1.800"/><path d="M13.500 6v8M10.500 10.500h7" stroke="#e0e0e0" stroke-width="1.500"/></svg>
        </div>
        <div class="btns off">
          <svg viewBox="0 0 23 23"><path d="M7 7h3v9H7z" fill="#41603a"/><path d="M16 7.500v8l-5-4z" fill="#606060"/></svg>
          <svg viewBox="0 0 23 23"><path d="M13 7h3v9h-3z" fill="#41603a"/><path d="M7 7.500v8l5-4z" fill="#606060"/></svg>
        </div>
      </div>
    </div>
    <div class="timeline">
      <svg class="ruler" width="1434" height="43" viewBox="235 930 1434 43">
        <defs>
          <pattern id="minor" x="253" y="930" width="21.381" height="43" patternUnits="userSpaceOnUse"><path d="M.5 19v9" stroke="#8f8f8f"/></pattern>
          <pattern id="major" x="317" y="930" width="85.525" height="43" patternUnits="userSpaceOnUse"><path d="M.5 16v15" stroke="#b4b4b4"/></pattern>
        </defs>
        <path d="M235 953.500h1433" stroke="#b4b4b4"/>
        <rect x="250" y="930" width="1418" height="43" fill="url(#minor)"/>
        <rect x="300" y="930" width="1368" height="43" fill="url(#major)"/>
        <g class="ticks">
          <text x="237" y="940">1</text><text x="317" y="940">24</text><text x="403" y="940">48</text><text x="488.500" y="940">72</text><text x="574" y="940">96</text><text x="659.500" y="940">120</text><text x="745" y="940">144</text><text x="831" y="940">168</text><text x="916.500" y="940">192</text><text x="1002" y="940">216</text><text x="1087.500" y="940">240</text><text x="1173" y="940">264</text><text x="1258.500" y="940">288</text><text x="1344" y="940">312</text><text x="1430" y="940">336</text><text x="1515.500" y="940">360</text><text x="1601" y="940">384</text>
        </g>
        <path d="M326.500 932.500h24v17h-7.500l-4.500 5-4.500-5h-7.500z" fill="#050505" stroke="#e8e8e8"/>
        <text class="head" x="338.500" y="946">30</text>
      </svg>
      <div class="range">
        <div class="field">1</div><div class="field dark">1</div>
        <svg class="slider" width="1258" height="22" viewBox="0 0 1258 22"><path d="M6 11.500h1246" stroke="#777" stroke-width="3"/><path d="m2 5.500 6 6-6 6zM1256 5.500l-6 6 6 6z" fill="#a9a9a9"/></svg>
        <div class="field dark">402</div><div class="field">402</div>
      </div>
    </div>
    <div class="keying">
      <svg width="56" height="60" viewBox="0 0 56 60"><rect x="38" y="12" width="17" height="20" rx="1" fill="#3c3c3c" stroke="#151515"/><path d="M43 19h6l-3 5z" fill="#9a9a9a"/><circle cx="22" cy="23" r="19.800" fill="#303030" stroke="#222"/><circle cx="24.500" cy="20" r="4" fill="none" stroke="#5f5f5f" stroke-width="2.400"/><path d="m21.500 22.500-6 6M19 25.500l2 2M16.500 28l2 2" stroke="#5f5f5f" stroke-width="2.400"/></svg>
    </div>
    <div class="channels">
      <div class="row">
        <div class="sq"><svg width="18" height="18" viewBox="0 0 18 18"><path d="M1 1h12v14H1z" fill="#a9ada8"/><path d="M1 5h3v3H1z" fill="#c22"/><path d="M1 8h3v3H1z" fill="#2a2"/><path d="M1 11h3v4H1z" fill="#35b"/><path d="M6 8q0-4 4-4 3 0 4 2M14 9q0 4-4 4-3 0-4-2" fill="none" stroke="#222" stroke-width="4"/><path d="M6 8q0-4 4-4 3 0 4 2M14 9q0 4-4 4-3 0-4-2" fill="none" stroke="#eee" stroke-width="1.600"/><path d="m13 11 5 3.500-5 3.500z" fill="#aaa"/></svg></div>
        <div class="combo keys"><span>0 keys, 0/0 channels</span><svg width="8" height="8" viewBox="0 0 8 8"><path d="M4 0 7.500 7.500h-7z" fill="#8b8b8b"/></svg></div>
      </div>
      <div class="row">
        <div class="sq"><svg width="14" height="14" viewBox="0 0 14 14"><path d="M0 0h14v14H0z" fill="#070707"/><path d="M0 6q2-3 4 3t4-6q2-3 3 4t3 2" fill="none" stroke="#5f9ade"/><path d="M0 8q2 3 4 0t4 0 6 0" fill="none" stroke="#d98a2c"/><path d="M0 7.500h14" stroke="#ddd" stroke-width=".8"/></svg></div>
        <div class="combo allch"><span>Key All Channels</span></div><div class="step"><svg width="10" height="16"><use href="#i-updown"/></svg></div>
      </div>
    </div>
  </footer>

  <div class="status">
    <div class="cook">
      <svg width="20" height="20" viewBox="0 0 20 20"><path d="M1 11Q1 3 9 2q8 0 8 7l-3 5q-6-2-8 0-4 1-5-3z" fill="#cdccc6"/><path d="M4 10q2-6 6-6M7 12q3-5 7-6M11 12l4-4" stroke="#8b8a86" fill="none"/><path d="m14 12 5 3.500-5 3.500z" fill="#9a9a9a"/></svg>
      <svg width="16" height="16" viewBox="0 0 16 16"><path d="M2 7q0-4 5-4 3 0 5 2M14 9q0 4-5 4-3 0-5-2" fill="none" stroke="#666" stroke-width="1.700"/><path d="M14 2v5H9zM2 14V9h5z" fill="#666"/></svg>
    </div>
    <div class="combo auto">Auto Update</div>
    <div class="step"><svg width="10" height="16"><use href="#i-updown"/></svg></div>
  </div>
</div>
</body>
</html>
```
FILE: styles.css
```css
* { box-sizing: border-box; }

body {
  margin: 0;
  background: #303030;
  color: #c6c6c6;
  font-family: "Noto Sans CJK SC", "Noto Sans", sans-serif;
}

svg { display: block; flex: none; }
.sprite { position: absolute; }

.app {
  display: flex;
  flex-direction: column;
  width: 1920px;
  height: 1026px;
  overflow: hidden;
  border-left: 1px solid #0c0c0c;
  border-right: 1px solid #060606;
}

/* Collapse handle on the left of each pane */
.grip {
  position: relative;
  flex: none;
  width: 10px;
  background: linear-gradient(90deg, #666 0 1px, #4a4a4a 1px, #353535);
  border-right: 1px solid #000;
}
.grip::after {
  content: "";
  position: absolute;
  left: 1px;
  top: 2px;
  border: 3.5px solid transparent;
  border-top: 0;
  border-bottom: 6px solid #000;
}
.grip-down::after {
  top: auto;
  bottom: 2px;
  border-bottom: 0;
  border-top: 5px solid #000;
}

/* Menus and combos */
.menubar {
  display: flex;
  flex: none;
  height: 25px;
  background: linear-gradient(#3a3a3a, #2f2f2f);
  border-bottom: 1px solid #000;
  font-size: 11.6px;
}
.menu { display: flex; align-items: center; line-height: 20px; }
.menu-main { gap: 9.7px; width: 268px; padding-left: 5px; }
.combo {
  display: flex;
  align-items: center;
  background: linear-gradient(#525252, #3d3d3d);
  border-left: 1px solid #666;
}
.step {
  display: flex;
  align-items: center;
  justify-content: center;
  width: 24px;
  background: linear-gradient(90deg, #262626, #303030);
}
.menubar .combo, .menubar .step { height: 23px; }
.desk, .radial { width: 104px; padding-left: 5px; }
.desk svg { margin-right: 4px; }
.radial { margin-left: 4px; }
.radial svg { margin-right: 4px; }
.take { width: 146px; margin-left: auto; padding-left: 4px; }
.take svg { margin-right: 3px; }
.help { margin: 3px 8px 0 9px; }

/* Shelves */
.shelves {
  display: flex;
  flex: none;
  height: 58px;
  border-bottom: 1px solid #000;
  background: #232323;
}
.shelf { display: flex; flex-direction: column; font-size: 9px; line-height: 18px; }
.shelf-a { width: 877px; border-right: 1px solid #000; }
.shelf-b { width: 1019px; border-left: 1px solid #000; }
.tabs { display: grid; height: 18px; background: #000; }
.shelf-a .tabs { grid-template-columns: 40px 42px 41px 48px 45px 46px 46px 46px 58px 61px 52px 71px 72px 55px 50px 46px 1fr; }
.shelf-b .tabs { grid-template-columns: 75px 54px 50px 41px 43px 64px 71px 71px 45px 74px 79px 78px 45px 32px 37px 45px 75px 1fr; }
.tabs span {
  height: 17px;
  margin-top: 1px;
  border-top: 1px solid #4a4a4a;
  border-right: 1px solid #000;
  background: linear-gradient(#363636, #272727);
  text-align: center;
  white-space: nowrap;
  line-height: 15px;
}
.tabs .on { height: 18px; background: #474747; border-top-color: #5a5a5a; }
.tab-end {
  display: flex;
  align-items: center;
  justify-content: space-between;
  padding: 0 3px 0 8px;
  background: #2d2d2d;
}
.tools {
  display: grid;
  flex: 1;
  background: linear-gradient(#484848, #353535);
  border-top: 1px solid #555;
}
.shelf-a .tools { grid-template-columns: 40px repeat(8, 41px) 56px 38px 60px 34px 76px 36px 54px 30px; }
.shelf-b .tools { grid-template-columns: 38px 57px 46px 54px 61px 68px 52px 76px 36px 50px 52px 66px 56px 76px 42px 54px 58px; }
.tools div { display: flex; flex-direction: column; align-items: center; padding-top: 2px; }
.tools svg { width: 20px; height: 20px; }
.tools b { font-weight: 400; line-height: 13px; white-space: nowrap; text-align: center; }
.tools .two b { position: relative; margin-top: -4px; line-height: 9px; }
.splitter {
  display: flex;
  align-items: center;
  justify-content: center;
  width: 11px;
  background: linear-gradient(#4c4c4c, #383838);
  border-right: 1px solid #000;
}
.splitter i {
  width: 6px;
  height: 15px;
  background: radial-gradient(circle, #000 0 0.8px, transparent 1px) 0 0 / 2px 2.5px;
}

/* Pane tabs */
.pane-tabs {
  display: flex;
  flex: none;
  height: 19px;
  background: #2d2d2d;
  font-size: 9.5px;
  line-height: 19px;
}
.ptab {
  display: flex;
  align-items: center;
  justify-content: space-between;
  width: 77px;
  margin-right: 1px;
  padding: 0 6px 0 6px;
  background: linear-gradient(#303030, #262626);
  border-left: 1px solid #1b1b1b;
}
.ptab.on { width: 129px; padding: 0 5px; border-left: 0; background: #484848; font-style: italic; }
.ptab:nth-child(3) { width: 99px; }
.ptab:nth-child(4) { width: 93px; }
.ptab-add { margin: 4px 0 0 8px; }
.pane-ctl { display: flex; align-items: center; gap: 7px; margin-left: auto; padding-right: 4px; }

/* Path bar */
.pathbar {
  display: flex;
  flex: none;
  align-items: center;
  height: 34px;
  padding: 0 5px 0 6px;
  background: linear-gradient(#484848, #363636);
  border-bottom: 1px solid #000;
}
.nav-back { margin-right: 7px; }
.nav-fwd { margin-right: 5px; }
.path {
  display: flex;
  flex: 1;
  align-items: center;
  height: 24px;
  padding-left: 5px;
  background: linear-gradient(#3f3f3f, #383838);
  border: 1px solid #000;
  font-size: 10.6px;
  color: #d0d0d0;
}
.c-obj { margin-right: 4px; }
.chev { margin: 0 5px 0 7px; }
.c-geo { margin-right: 3px; }
.c-ffx { margin: 0 6px 0 3px; }
.path-drop {
  display: flex;
  align-items: center;
  justify-content: center;
  width: 18px;
  height: 22px;
  margin-left: auto;
  background: #2a2a2a;
}
.pin { margin: 0 8px 0 10px; }

/* Network editor menu */
.netbar {
  display: flex;
  flex: none;
  height: 25px;
  background: linear-gradient(#3a3a3a, #303030);
  border-bottom: 1px solid #000;
  font-size: 11.6px;
}
.menu-net { gap: 14.4px; padding-left: 8px; }
.net-icons {
  display: grid;
  grid-template-columns: 24px 24px 41px 24px 41px 24px 24px 25px 41px 24px 16px;
  align-items: center;
  margin-left: auto;
  padding-right: 4px;
}
.net-icons svg { width: 16px; height: 15px; }

/* Network canvas */
.network { flex: none; height: 768px; overflow: hidden; background: #303030; }
.type { font-size: 18px; fill: #626262; }
.name { font-size: 21.7px; fill: #cbcbcb; }
.out { font-size: 18px; fill: #6f9fdb; }
.watermark { font-size: 19.5px; fill: #454545; }
.context { font-size: 23px; font-weight: 700; fill: #555; }

/* Playbar */
.playbar {
  display: flex;
  flex: none;
  height: 72px;
  border-top: 1px solid #666;
  border-bottom: 1px solid #000;
  background: #2e2e2e;
}
.row { display: flex; align-items: center; }
.transport { width: 224px; padding: 7px 0 0 5px; }
.btns { display: flex; border: 1px solid #111; border-left: 0; background: #111; }
.btns svg {
  width: 27px;
  height: 27px;
  background: linear-gradient(#555, #3a3a3a);
  border-right: 1px solid #111;
  fill: #dcdcdc;
}
.btns .stop { background: linear-gradient(#7b929e, #a7b4bb); }
.field {
  display: flex;
  align-items: center;
  width: 43px;
  height: 22px;
  padding-left: 3px;
  background: #1e1e1e;
  border: 1px solid #171717;
  color: #e2e2e2;
  font: 11px/20px "DejaVu Sans Mono", monospace;
}
.field.dark { background: #111; }
.frame { width: 46px; height: 28px; margin: 0 2px 0 1px; background: #111; }
.nudge svg { width: 14px; }
.low { margin-top: 6px; gap: 3px; }
.low .btns svg { height: 23px; }
.low .off { background: none; border-color: #222; }
.low .off svg { width: 23px; background: #2b2b2b; border-color: #222; }
.timeline { width: 1434px; }
.ruler { overflow: visible; }
.ticks { font-size: 9.5px; fill: #7c7c7c; }
.head { font-size: 11.5px; fill: #eee; text-anchor: middle; }
.range { display: flex; gap: 2px; align-items: center; height: 24px; }
.slider { margin: 0 -2px; }
.keying { width: 60px; padding-top: 10px; }
.channels { display: flex; flex-direction: column; gap: 5px; width: 186px; padding: 7px 0 0 4px; font-size: 10.7px; }
.channels .row { gap: 5px; height: 25px; }
.channels .row:last-child { height: 23px; }
.sq {
  display: flex;
  align-items: center;
  justify-content: center;
  width: 24px;
  height: 24px;
  background: #484848;
  border: 1px solid #111;
}
.keys { justify-content: space-between; width: 153px; height: 24px; padding: 0 5px 0 14px; border: 1px solid #181818; line-height: 20px; }
.allch { width: 131px; height: 22px; padding-left: 11px; border: 1px solid #181818; border-right: 0; line-height: 20px; }
.channels .step { height: 22px; width: 23px; margin-left: -5px; border: 1px solid #181818; border-left: 0; }

/* Status bar */
.status { display: flex; flex: 1; justify-content: flex-end; background: #191919; }
.cook { display: flex; align-items: center; gap: 11px; width: 54px; padding-left: 4px; background: #3a3a3a; }
.status .combo { width: 93px; justify-content: center; font-size: 10.6px; line-height: 20px; }
.status .combo, .status .step, .cook { height: 23px; }
```
